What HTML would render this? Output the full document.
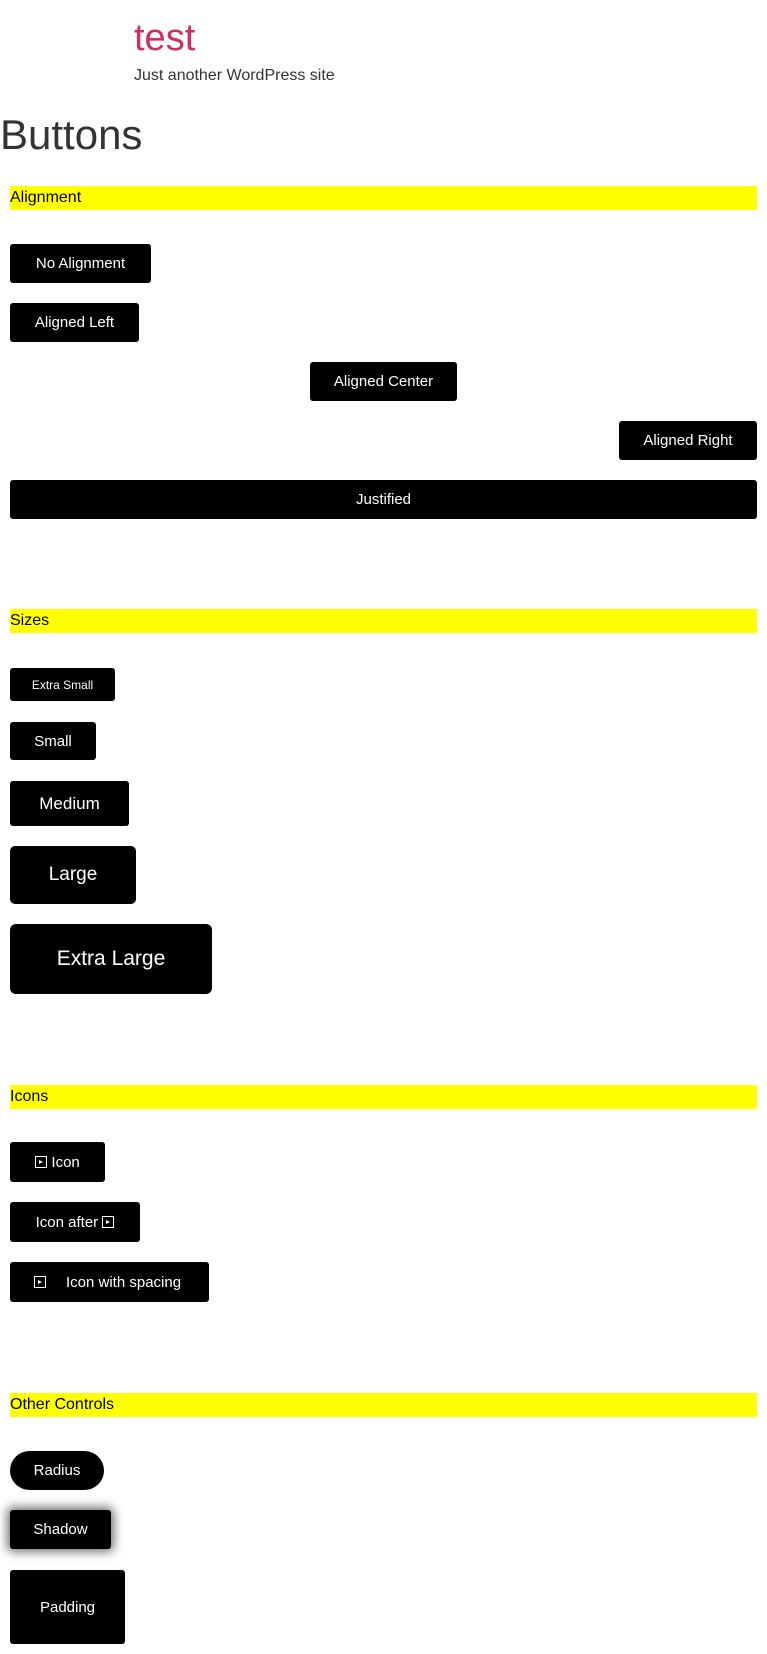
<!DOCTYPE html>
<html><head><meta charset="utf-8"><style>
body{margin:0;background:#fff;font-family:"Liberation Sans",Arial,sans-serif;width:767px;height:1654px;position:relative;overflow:hidden}
.a{position:absolute}
.y{position:absolute;left:10px;width:747px;height:24px;background:#ff0;color:#000;font-size:16px;line-height:24px}
.b{position:absolute;background:#000;color:#fff;border-radius:3px;display:flex;align-items:center;justify-content:center;font-size:15px;white-space:nowrap;box-sizing:border-box}
.i{display:inline-block;width:12px;height:12px;border:1.5px solid #fff;position:relative;box-sizing:border-box;vertical-align:middle}
.i:after{content:"";position:absolute;left:3px;top:2.5px;border-left:4px solid #fff;border-top:2.5px solid transparent;border-bottom:2.5px solid transparent}
</style></head><body>
<div class="a" style="left:134px;top:14px;font-size:38px;color:#cd2f63;line-height:48px">test</div>
<div class="a" style="left:134px;top:66px;font-size:16px;color:#333;line-height:20px">Just another WordPress site</div>
<div class="a" style="left:0;top:110px;font-size:42px;color:#333;line-height:50px">Buttons</div>

<div class="y" style="top:186px">Alignment</div>
<div class="b" style="left:10px;top:244px;width:141px;height:39px">No Alignment</div>
<div class="b" style="left:10px;top:303px;width:129px;height:39px">Aligned Left</div>
<div class="b" style="left:310px;top:362px;width:147px;height:39px">Aligned Center</div>
<div class="b" style="left:619px;top:421px;width:138px;height:39px">Aligned Right</div>
<div class="b" style="left:10px;top:480px;width:747px;height:39px">Justified</div>

<div class="y" style="top:609px">Sizes</div>
<div class="b" style="left:10px;top:668px;width:105px;height:33px;font-size:12px">Extra Small</div>
<div class="b" style="left:10px;top:722px;width:86px;height:38px">Small</div>
<div class="b" style="left:10px;top:781px;width:119px;height:45px;font-size:17px">Medium</div>
<div class="b" style="left:10px;top:846px;width:126px;height:58px;font-size:19px;border-radius:5px">Large</div>
<div class="b" style="left:10px;top:924px;width:202px;height:70px;font-size:21px;border-radius:6px">Extra Large</div>

<div class="y" style="top:1085px">Icons</div>
<div class="b" style="left:10px;top:1142px;width:95px;height:40px"><span class="i"></span>&nbsp;Icon</div>
<div class="b" style="left:10px;top:1202px;width:130px;height:40px">Icon after&nbsp;<span class="i"></span></div>
<div class="b" style="left:10px;top:1262px;width:199px;height:40px;justify-content:flex-start;padding-left:24px"><span class="i"></span><span style="margin-left:20px">Icon with spacing</span></div>

<div class="y" style="top:1393px">Other Controls</div>
<div class="b" style="left:10px;top:1451px;width:94px;height:39px;border-radius:20px">Radius</div>
<div class="b" style="left:10px;top:1510px;width:101px;height:39px;box-shadow:0 0 10px 3px rgba(0,0,0,.55)">Shadow</div>
<div class="b" style="left:10px;top:1570px;width:115px;height:74px">Padding</div>
</body></html>
